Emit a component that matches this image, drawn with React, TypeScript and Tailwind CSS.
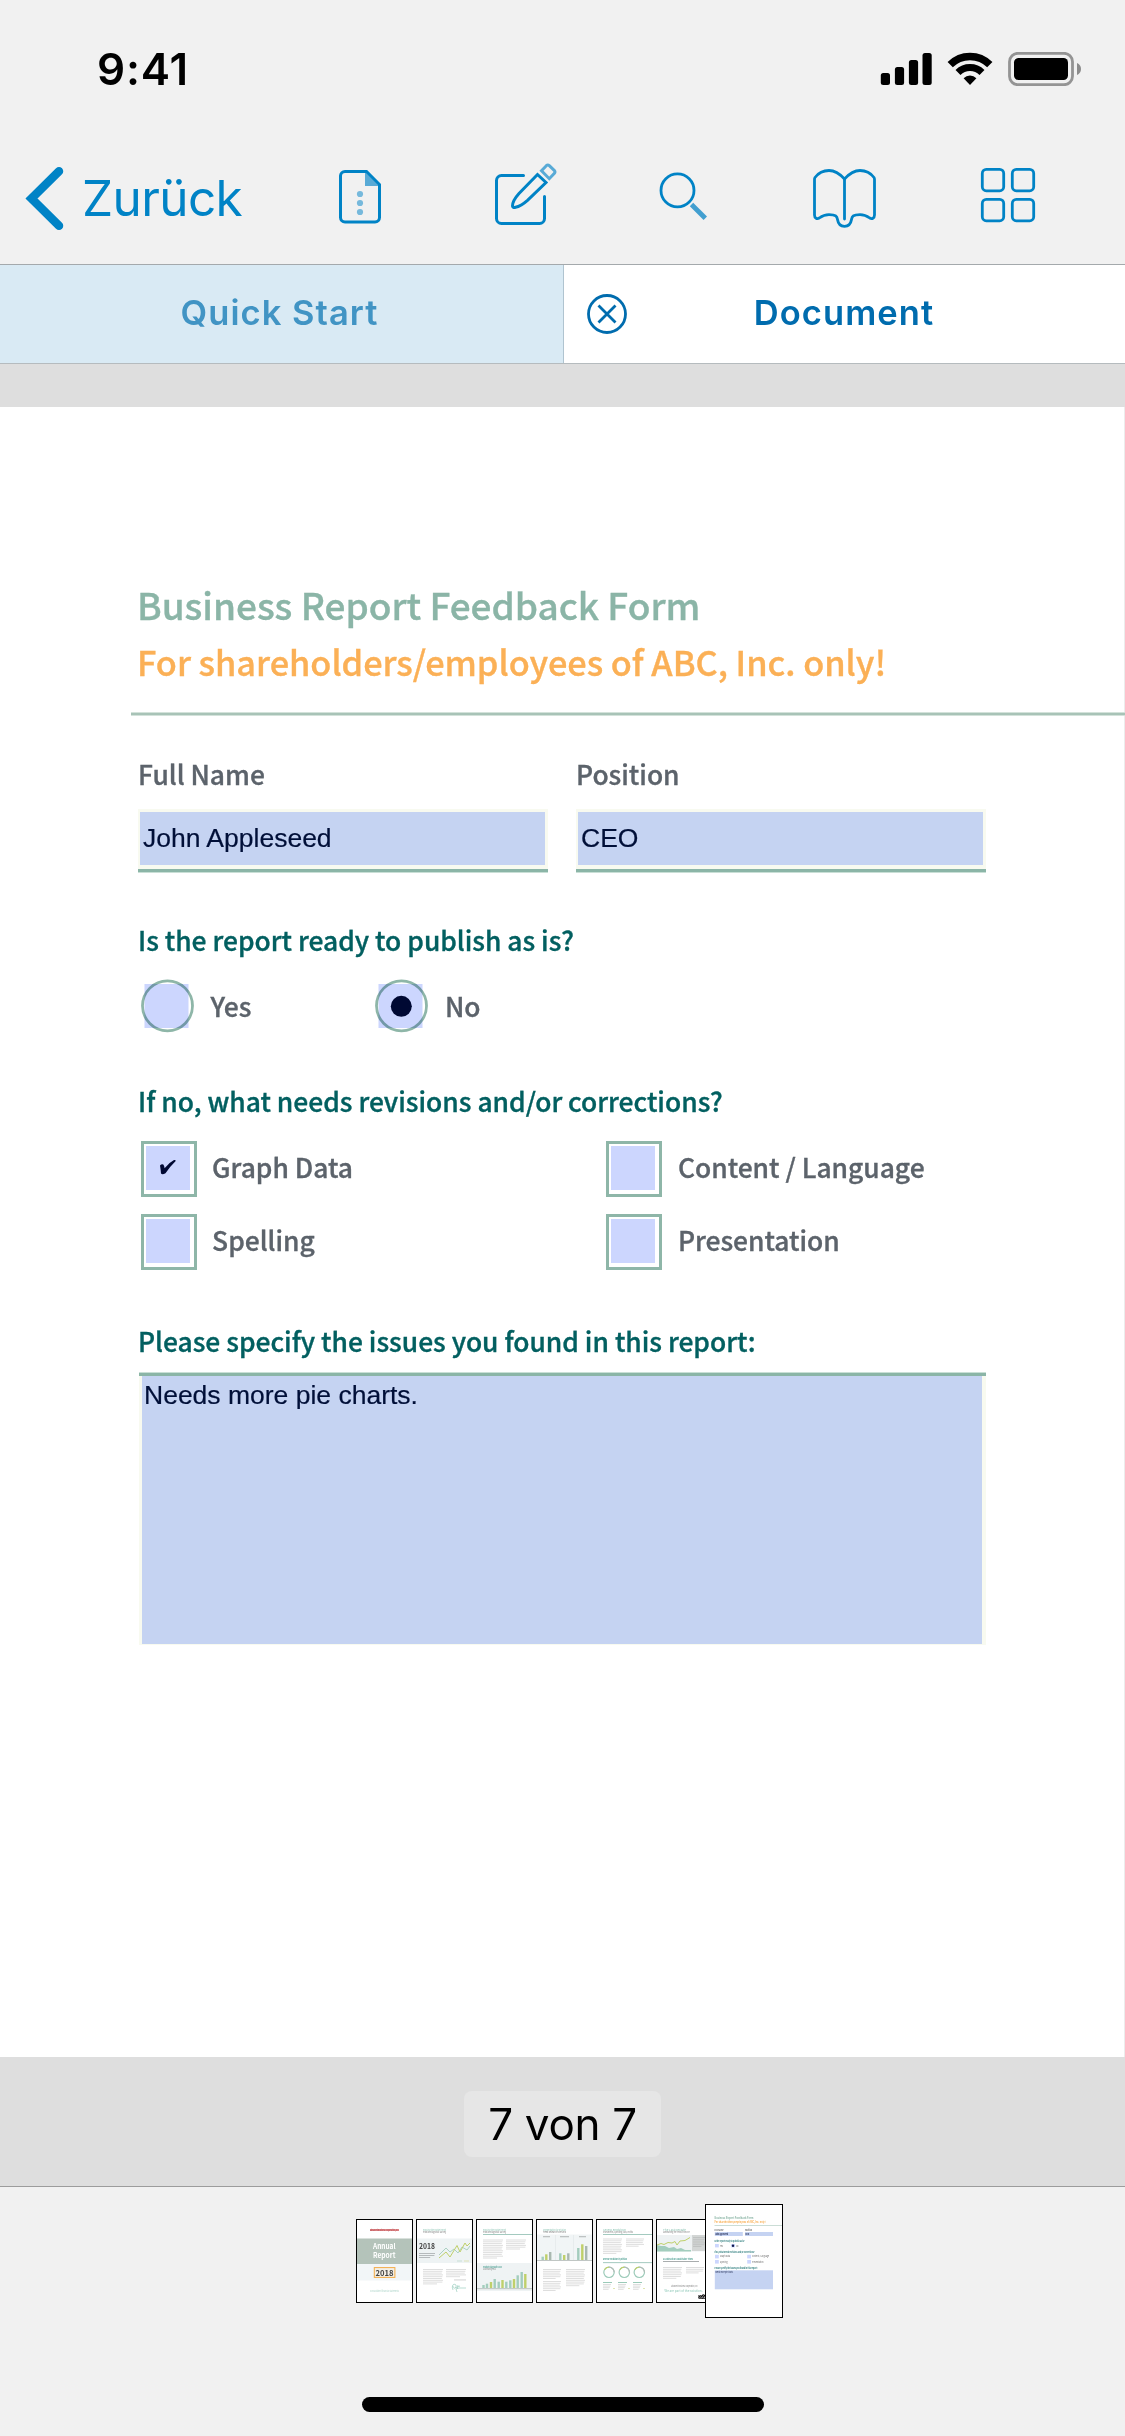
import React from 'react';

const BLUE = '#0083c6';
const TEAL = '#a3cdbd';
const LIME = '#bfd06a';

/* ---------- Status bar ---------- */

function Signal() {
  return (
    <svg width="52" height="34" viewBox="880 52 52 34">
      <rect x="880.8" y="73" width="9.2" height="12" rx="2.5" />
      <rect x="894.9" y="67" width="9.2" height="18" rx="2.5" />
      <rect x="908.9" y="60" width="9.2" height="25" rx="2.5" />
      <rect x="922.5" y="53" width="9.2" height="32" rx="2.5" />
    </svg>
  );
}

function Wifi() {
  return (
    <svg width="46" height="34" viewBox="947 52 46 34" fill="none" stroke="#000">
      <path d="M950.2 64.7A28 28 0 0 1 989.8 64.7" strokeWidth="7.4" />
      <path d="M958 72.5A17 17 0 0 1 982 72.5" strokeWidth="7" />
      <path d="M963.6 78.2A9.2 9.2 0 0 1 976.4 78.2L970 85Z" fill="#000" stroke="none" />
    </svg>
  );
}

function Battery() {
  return (
    <svg width="74" height="34" viewBox="1008 52 74 34">
      <rect x="1009.5" y="53.3" width="63" height="31.4" rx="8.5" fill="none" stroke="#949494" strokeWidth="2.8" />
      <rect x="1014" y="58" width="54" height="22" rx="4.5" />
      <path d="M1077 63c2.6 1 4 3.4 4 6s-1.4 5-4 6z" fill="#8c8c8c" />
    </svg>
  );
}

/* ---------- Toolbar icons ---------- */

function ToolIcon({ box, children }: { box: string; children: React.ReactNode }) {
  return (
    <svg width="72" height="72" viewBox={box} fill="none" stroke={BLUE} strokeWidth="3" className="shrink-0">
      {children}
    </svg>
  );
}

function Toolbar() {
  return (
    <div className="flex h-[120px] items-center">
      <button className="flex h-[72px] w-[324px] items-center pl-[24px] text-[#0083c6]">
        <svg width="42" height="72" viewBox="24 162 42 72" fill="none" stroke={BLUE} strokeWidth="8.5">
          <path d="M59 171.300L31.5 198.500L59 225.700" strokeLinecap="round" />
        </svg>
        <span className="ml-[16px] pt-[2px] text-[49.5px] leading-none tracking-[-0.6px]">Zurück</span>
      </button>
      <div className="flex w-[720px] justify-between">
        <ToolIcon box="324 162 72 72">
          <path d="M365 171.500V186H379.500Z" fill="#58aad6" stroke="none" />
          <path d="M345 171.500H366.500L379.500 184.500V217.500a4.500 4.500 0 0 1-4.500 4.500H345a4.500 4.500 0 0 1-4.500-4.500V176a4.500 4.500 0 0 1 4.500-4.500Z" />
          <g fill="#76b9dc" stroke="none">
            <circle cx="360" cy="194" r="3.1" />
            <circle cx="360" cy="203" r="3.1" />
            <circle cx="360" cy="212" r="3.1" />
          </g>
        </ToolIcon>
        <ToolIcon box="486 162 72 72">
          <path d="M523.500 175.500H501.500a5 5 0 0 0-5 5V218.500a5 5 0 0 0 5 5H539.500a5 5 0 0 0 5-5V196.500" strokeLinecap="round" />
          <path d="M537.500 174.500L519 193.500C514.500 198.500 512.500 203 512.500 206C512.700 207.300 513.700 207.800 515.500 207.300C519.500 206.500 523 204.300 527.500 200.300L546 182.500Z" />
          <path d="M541.500 170.800L546.300 165.700Q547.800 164.300 549.300 165.700L554.200 170.300Q555.600 171.800 554.400 173.400L549.300 178.700Z" stroke="#58aad6" />
        </ToolIcon>
        <ToolIcon box="648 162 72 72">
          <circle cx="677.5" cy="190.4" r="16.5" strokeWidth="2.8" />
          <path d="M691.500 204.500L705.300 218.300" stroke="#429fd0" strokeWidth="4.8" />
        </ToolIcon>
        <ToolIcon box="810 162 72 72">
          <path
            d="M844.500 179C839.500 173.500 834.500 170.500 829 170.500C823.500 170.500 818 173.500 815 177.500Q814.500 178.200 814.500 179.500V215C814.500 218.300 817 219.300 819.300 218C822 216 825.500 214.600 829 214.600C836 214.600 837 216.500 837.500 219.500C838.300 224.500 841 226.300 844.500 226.300C848 226.300 850.700 224.500 851.500 219.500C852 216.500 853 214.600 860 214.600C863.500 214.600 867 216 869.700 218C872 219.300 874.500 218.300 874.500 215V179.500Q874.500 178.200 874 177.500C871 173.500 865.500 170.500 860 170.500C854.500 170.500 849.500 173.500 844.500 179Z"
            strokeWidth="2.8"
          />
          <path d="M844.500 179V219" strokeLinecap="round" strokeWidth="2.8" />
        </ToolIcon>
        <ToolIcon box="972 162 72 72">
          <rect x="982.3" y="169.4" width="21.4" height="21.4" rx="4" strokeWidth="2.8" />
          <rect x="1012.3" y="169.4" width="21.4" height="21.4" rx="4" strokeWidth="2.8" />
          <rect x="982.3" y="199.4" width="21.4" height="21.4" rx="4" strokeWidth="2.8" />
          <rect x="1012.3" y="199.4" width="21.4" height="21.4" rx="4" strokeWidth="2.8" />
        </ToolIcon>
      </div>
    </div>
  );
}

/* ---------- Form pieces ---------- */

function Field({ label, value }: { label: string; value: string }) {
  return (
    <div className="w-[410px]">
      <div className="text-[26.4px] leading-[42px] font-medium text-[#5c636b]">{label}</div>
      <div className="mt-[14px] h-[60px] bg-[#f8faf0] pt-[3px] pr-[3px] pl-[2px]">
        <div className="flex h-[53px] items-center bg-[#c5d3f2] pt-px pl-[3px] font-['Liberation_Sans',sans-serif] text-[26.5px] text-[#000f38] [-webkit-text-stroke:0.2px]">
          {value}
        </div>
      </div>
      <div className="h-1 border-b border-[#c9dfd6] bg-[#8bb5a7]" />
    </div>
  );
}

function Question({ children }: { children: React.ReactNode }) {
  return <div className="relative top-px pl-px text-[26.4px] leading-10 font-medium whitespace-nowrap text-[#025f60]">{children}</div>;
}

function Radio({ label, checked }: { label: string; checked?: boolean }) {
  return (
    <div className="flex h-[54px] items-center">
      <svg width="54" height="54" viewBox="0 0 54 54">
        <circle cx="26.5" cy="26.8" r="25" fill="#fff" stroke="#8eb6a8" strokeWidth="2.8" />
        <rect x="3.5" y="5" width="44" height="44" fill="#ccd6fe" style={{ mixBlendMode: 'multiply' }} />
        {checked && <circle cx="26.3" cy="27.3" r="10.5" fill="#000933" />}
      </svg>
      <span className="pl-4 text-[26.4px] font-medium text-[#5c636b]">{label}</span>
    </div>
  );
}

function Check({ label, checked }: { label: string; checked?: boolean }) {
  return (
    <div className="flex h-14 items-center">
      <div className="h-14 w-14 border-[3px] border-[#8eb6a8] p-[2px]">
        <div className="flex h-11 w-11 items-center justify-center bg-[#ccd6fe]">
          {checked && (
            <svg width="44" height="44" viewBox="0 0 44 44">
              <path d="M14 19.500Q15.500 17.800 17.300 18.500Q18.300 19.800 18.600 22.300Q23 16.500 28 14Q29.800 13.600 29.700 15Q24.500 20 19.500 27.200Q16.500 29.200 15 27.600Q14.800 24 14 19.500Z" fill="#000933" />
            </svg>
          )}
        </div>
      </div>
      <span className="pb-[4px] pl-[15.5px] text-[26.4px] font-medium whitespace-nowrap text-[#5c636b]">{label}</span>
    </div>
  );
}

/* ---------- Page thumbnails ---------- */

function Lines({ x, y, w, n, step = 1.8, color = '#dedede' }: { x: number; y: number; w: number; n: number; step?: number; color?: string }) {
  return (
    <g fill={color}>
      {Array.from({ length: n }, (_, i) => (
        <rect key={i} x={x} y={y + i * step} width={i === n - 1 ? w * 0.7 : w - (i % 3) * 0.6} height="1" />
      ))}
    </g>
  );
}

function Tiny({ x, y, w, color, bold, size = 2.4, children }: { x: number; y: number; w: number; color: string; bold?: boolean; size?: number; children: string }) {
  return (
    <text x={x} y={y} fontSize={size} textLength={w} lengthAdjust="spacingAndGlyphs" fill={color} fontWeight={bold ? 700 : 400}>
      {children}
    </text>
  );
}

function Heading({ a, b, rule, w = 23 }: { a: string; b: string; rule?: boolean; w?: number }) {
  return (
    <g>
      <Tiny x={7} y={11.5} w={23} color="#8cc3b3">{a}</Tiny>
      <Tiny x={7} y={14.1} w={w} color="#777">{b}</Tiny>
      {rule && <rect x="7" y="15" width="50" height="0.8" fill="#8dbdb0" />}
    </g>
  );
}

function Bars({ data, base, w = 2.4 }: { data: [number, number, string][]; base: number; w?: number }) {
  return (
    <g>
      {data.map(([x, top, c]) => (
        <rect key={x} x={x - w / 2} y={top} width={w} height={base - top} fill={c} />
      ))}
    </g>
  );
}

function Thumb({ children }: { children: React.ReactNode }) {
  return (
    <svg width="57" height="84" viewBox="0 0 57 84" className="shrink-0 bg-white">
      {children}
      <rect x="0.5" y="0.5" width="56" height="83" fill="none" stroke="#000" />
    </svg>
  );
}

const GREY = '#a9b8b0';

function Thumbnails() {
  return (
    <div className="flex items-center gap-[3px] pl-[356px] font-['Noto_Sans_CJK_JP',sans-serif]">
      <Thumb>
        <rect x="14" y="10" width="29" height="2" fill="#eb9a9a" />
        <Tiny x={14} y={11.9} w={29} color="#b0444a" bold>Advanced Business Cooperation, Inc.</Tiny>
        <rect x="0" y="19.5" width="57" height="25.5" fill="#b4c3ba" />
        <rect x="0" y="45" width="57" height="16.5" fill="#f2f6f8" />
        <Tiny x={17} y={30} w={22.5} color="#fff" bold size={7.4}>Annual</Tiny>
        <Tiny x={17} y={39} w={22.5} color="#fff" bold size={7.4}>Report</Tiny>
        <rect x="18.3" y="48.6" width="20.6" height="9.8" fill="#f3efe6" stroke="#f2ac48" />
        <Tiny x={19.5} y={56.5} w={18} color="#454545" bold size={8}>2018</Tiny>
        <Tiny x={14} y={73} w={29} color="#a9d2c6">Consolidated financial statements</Tiny>
      </Thumb>
      <Thumb>
        <Heading a="Evolving the Market Trend" b="Product Diagnostic Survey" />
        <rect x="0" y="19.5" width="57" height="24.5" fill="#eef3f4" />
        <Tiny x={3} y={29.5} w={16} color="#454545" bold size={7.4}>2018</Tiny>
        <Lines x={3} y={34} w={16} n={3} step={2} color="#b5babc" />
        <path d="M23 36L30 29L34 33L38 30L42 34L46 28L51 31L54 27" fill="none" stroke={TEAL} strokeWidth="0.9" />
        <path d="M23 39L30 33L34 38L41 26.500L44 33L49 24L51 27L54 24" fill="none" stroke={LIME} strokeWidth="1" />
        <rect x="41" y="41.5" width="5" height="1" fill="#c8dfd6" />
        <rect x="48" y="41.5" width="5" height="1" fill="#dde3b8" />
        <Lines x={7} y={50} w={20} n={9} />
        <Lines x={30} y={50} w={20} n={5} />
        <rect x="38" y="60.5" width="12" height="0.9" fill="#ccc" />
        <path d="M37 71C35 66 38 64 40 66C41 69 37 71 37 67M39 69L44 67M41 73L40 70L43 69H50M42 66L41 70" fill="none" stroke="#9ccfc0" strokeWidth="0.7" />
      </Thumb>
      <Thumb>
        <Heading a="Evolving the Market Trend" b="Product Diagnostic Survey" rule />
        <Lines x={7} y={20.5} w={20} n={11} />
        <Lines x={30} y={20.5} w={20} n={6} />
        <rect x="0" y="44" width="57" height="28" fill="#eff3f4" />
        <Tiny x={7} y={48.5} w={19} color="#3d9688" bold>Product Diagnostic 2018</Tiny>
        <Tiny x={7} y={50.8} w={13} color="#777">As shown by 2018</Tiny>
        <rect x="0" y="69" width="57" height="1.2" fill="#c4cac8" />
        <Bars
          base={69}
          data={[[7.5, 66, TEAL], [11, 64.7, TEAL], [15, 63, LIME], [18.7, 60, TEAL], [22.7, 62.7, TEAL], [26.5, 61, LIME], [30.3, 62.7, TEAL], [34.3, 61.3, TEAL], [38, 60, LIME], [41.7, 56.3, TEAL], [45.7, 53, TEAL], [49.3, 55, LIME]]}
        />
      </Thumb>
      <Thumb>
        <Heading a="Segmentation by Division" b="Trend Research Overview" />
        <rect x="0" y="15.5" width="57" height="26" fill="#f1f5f6" />
        <path d="M19.500 16V41M37.500 16V41" stroke="#e2e8ea" strokeWidth="0.7" />
        <g fill="#a9adae">
          <rect x="7" y="17.3" width="7" height="0.9" />
          <rect x="24" y="17.3" width="9" height="0.9" />
          <rect x="43" y="17.3" width="7" height="0.9" />
        </g>
        <rect x="0" y="41" width="57" height="0.9" fill="#b9c0be" />
        <Bars
          base={41}
          data={[[6.7, 37.7, TEAL], [10.3, 35.3, LIME], [14.2, 33, GREY], [24.3, 34.3, TEAL], [28.2, 36, LIME], [32.3, 34.3, GREY], [42.3, 29, TEAL], [46.3, 25.3, LIME], [50.2, 27, GREY]]}
        />
        <Lines x={7} y={50} w={18} n={6} />
        <Lines x={7} y={62} w={18} n={6} />
        <Lines x={30} y={50} w={19} n={10} />
      </Thumb>
      <Thumb>
        <Heading a="General Breakdown" b="Investments, Spending Cuts, Profits" w={30} rule />
        <Lines x={7} y={19.5} w={19} n={9} />
        <Lines x={30} y={19.5} w={18} n={5} />
        <Tiny x={7} y={41} w={24} color="#3d9688" bold>Revenue Breakdown by Division</Tiny>
        <rect x="7" y="43.3" width="50" height="0.8" fill="#8dbdb0" />
        {[13, 28.3, 43.3].map((cx, i) => (
          <g key={cx} fill="none" strokeWidth="1.2">
            <circle cx={cx} cy="53.3" r="5.2" stroke="#9ccbb9" />
            <path d={`M${cx} 48.1A5.2 5.2 0 0 1 ${cx + 5.2} 53.3`} stroke="#b3bbb8" />
            <path d={`M${cx - 4.5} 50.7A5.2 5.2 0 0 1 ${cx} 48.1`} stroke={LIME} />
            <rect x={7 + i * 15} y="63" width="9" height="0.9" fill="#8fc4b0" stroke="none" />
            <Lines x={7 + i * 15} y={65} w={8} n={4} step={1.6} />
            <rect x={17 + i * 15} y="69" width="2" height="1" fill="#e0e5b0" stroke="none" />
          </g>
        ))}
      </Thumb>
      <Thumb>
        <Heading a="The Last Decade" b="Summarizing the Trends from 2007" w={27} />
        <rect x="0" y="16" width="57" height="16.5" fill="#eef2f3" />
        <path d="M1 26L5 27L9 27L13 29L18 28L21 30L25 29L29 31L35 31V32.500H1Z" fill={TEAL} />
        <path d="M1 26L5 24.500L8 25.500L12 23.500L16 24L19 22.500L21 26L24 22L29 21.500L34 18.500" fill="none" stroke={LIME} strokeWidth="1" />
        <rect x="36" y="16" width="21" height="16" fill="#d3d6d5" />
        <Lines x={37} y={18} w={12} n={6} color="#c0c3c2" />
        <Tiny x={7} y={41.2} w={30} color="#3d9688" bold>A Look Back on Sustainable Times</Tiny>
        <rect x="7" y="42" width="36" height="1" fill="#a9adae" />
        <Lines x={7} y={48} w={19} n={7} />
        <Lines x={30} y={48} w={18} n={4} />
        <Tiny x={15} y={68} w={27} color="#777">Advanced Business Cooperation, Inc.</Tiny>
        <Tiny x={8.5} y={73.3} w={38} color="#8cc7b6" size={3.2}>We are part of the solution.</Tiny>
        <path d="M42.500 79L44.500 76.500M44.500 79L47.500 75M42 77H49M46.500 79.500L49 75.500M42.500 79.200H49" stroke="#000" strokeWidth="1" fill="none" />
      </Thumb>
      <svg width="78" height="114" viewBox="0 0 78 114" className="z-10 -ml-[11px] shrink-0 bg-white">
        <Tiny x={9.5} y={15.2} w={39} color="#8bb5a5" bold size={3}>Business Report Feedback Form</Tiny>
        <Tiny x={9.5} y={19.2} w={51} color="#f9ac4d" bold size={3}>For shareholders/employees of ABC, Inc. only!</Tiny>
        <rect x="9.5" y="21.2" width="68" height="0.7" fill="#b5cfc4" />
        <Tiny x={9.5} y={26.6} w={9} color="#666" bold>Full Name</Tiny>
        <Tiny x={40} y={26.6} w={7} color="#666" bold>Position</Tiny>
        <rect x="9.8" y="28" width="28" height="4" fill="#c5d3f2" />
        <rect x="40" y="28" width="28" height="4" fill="#c5d3f2" />
        <Tiny x={10} y={31} w={13} color="#101a44" bold>John Appleseed</Tiny>
        <Tiny x={40.3} y={31} w={4} color="#101a44" bold>CEO</Tiny>
        <Tiny x={9.5} y={38} w={30} color="#1c7373" bold>Is the report ready to publish as is?</Tiny>
        <rect x="10" y="40" width="3.8" height="3.4" fill="#ccd6fe" />
        <rect x="26.2" y="40" width="3.8" height="3.4" fill="#ccd6fe" />
        <circle cx="28" cy="41.7" r="1.2" fill="#10184a" />
        <Tiny x={15} y={42.5} w={3} color="#666">Yes</Tiny>
        <Tiny x={31} y={42.5} w={2.5} color="#666">No</Tiny>
        <Tiny x={9.5} y={49} w={40} color="#1c7373" bold>If no, what needs revisions and/or corrections?</Tiny>
        {[50.8, 56].map((y) => (
          <g key={y}>
            <rect x="10" y={y} width="3.8" height="3.6" fill="#ccd6fe" />
            <rect x="42.2" y={y} width="3.8" height="3.6" fill="#ccd6fe" />
          </g>
        ))}
        <Tiny x={15} y={53.4} w={10} color="#666">Graph Data</Tiny>
        <Tiny x={47} y={53.4} w={17} color="#666">Content / Language</Tiny>
        <Tiny x={15} y={58.6} w={7.5} color="#666">Spelling</Tiny>
        <Tiny x={47} y={58.6} w={11.5} color="#666">Presentation</Tiny>
        <Tiny x={9.5} y={65.4} w={43} color="#1c7373" bold>Please specify the issues you found in this report:</Tiny>
        <rect x="9.8" y="66.3" width="58.2" height="19" fill="#c5d3f2" />
        <Tiny x={10.2} y={69} w={18} color="#101a44">Needs more pie charts.</Tiny>
        <rect x="0.5" y="0.5" width="77" height="113" fill="none" stroke="#000" />
      </svg>
    </div>
  );
}

/* ---------- Screen ---------- */

export default function App() {
  return (
    <div className="flex h-[2436px] w-[1125px] flex-col overflow-hidden bg-[#f1f1f1] font-['Inter',sans-serif] text-black">
      <header className="h-[265px] border-b border-[#a4a9ac]">
        <div className="flex h-[138px] items-center justify-between pr-[43px] pl-[97px]">
          <span className="text-[44px] font-semibold tracking-[0.8px]">9:41</span>
          <div className="flex gap-[15px]">
            <Signal />
            <Wifi />
            <Battery />
          </div>
        </div>
        <Toolbar />
      </header>

      <nav className="flex h-[99px] border-b border-[#b5bbbe] text-[34.5px] font-semibold">
        <div className="flex w-[564px] items-center justify-center border-r border-[#b0c4d0] bg-[#d9eaf4] pr-[4px] pb-[2px] tracking-[1.05px] text-[#4194c4]">
          Quick Start
        </div>
        <div className="flex flex-1 items-center bg-white pb-px text-[#006cae]">
          <svg width="40" height="40" viewBox="0 0 40 40" fill="none" stroke="currentColor" strokeWidth="2.8" className="ml-[23px]">
            <circle cx="20" cy="20" r="18.5" />
            <path d="M11.500 11.500L28.500 28.500M28.500 11.500L11.500 28.500" />
          </svg>
          <span className="flex-1 pb-px text-center tracking-[1.1px]">Document</span>
          <span className="w-16" />
        </div>
      </nav>

      <main className="h-[1822px] bg-[#dedede] pt-[43px]">
        <section className="h-[1650px] border-r border-[#ececec] bg-white pt-[169px] pl-[137px] font-['Noto_Sans_CJK_JP',sans-serif] [-webkit-text-stroke:0.35px]">
          <h1 className="text-[37px] leading-[57px] font-medium tracking-[-0.03px] whitespace-nowrap text-[#8bb5a7]">Business Report Feedback Form</h1>
          <h2 className="text-[34.3px] leading-[57px] font-medium tracking-[-0.02px] whitespace-nowrap text-[#fbb056]">
            For shareholders/employees of ABC, Inc. only!
          </h2>
          <div className="mt-[22px] -mr-px -ml-[6.5px] h-1 border-y border-[#d3e2da] bg-[#a8c3b7]" />

          <div className="mt-[37px] ml-px flex gap-7">
            <Field label="Full Name" value="John Appleseed" />
            <Field label="Position" value="CEO" />
          </div>

          <div className="mt-[46px]">
            <Question>Is the report ready to publish as is?</Question>
            <div className="mt-5 ml-[3.5px] grid grid-cols-[234.5px_200px]">
              <Radio label="Yes" />
              <Radio label="No" checked />
            </div>
          </div>

          <div className="mt-[47px]">
            <Question>If no, what needs revisions and/or corrections?</Question>
            <div className="mt-[21px] ml-[3.6px] grid grid-cols-[465.8px_400px] gap-y-[17px]">
              <Check label="Graph Data" checked />
              <Check label="Content / Language" />
              <Check label="Spelling" />
              <Check label="Presentation" />
            </div>
          </div>

          <div className="mt-[50px]">
            <Question>Please specify the issues you found in this report:</Question>
            <div className="mt-3 ml-[2px] w-[847px]">
              <div className="h-1 border-t border-[#c9dfd6] bg-[#8bb5a7]" />
              <div className="h-[269px] bg-[#f8faf0] pr-1 pb-px pl-[3px]">
                <div className="h-full bg-[#c5d3f2] pt-[4px] pl-[2px] font-['Liberation_Sans',sans-serif] text-[26.5px] leading-[30px] text-[#000f38] [-webkit-text-stroke:0.2px]">
                  Needs more pie charts.
                </div>
              </div>
            </div>
          </div>
        </section>

        <div className="flex justify-center pt-[34px]">
          <div className="flex h-[66px] w-[197px] items-center justify-center rounded-lg bg-[#e6e6e6] text-[44px] tracking-[-0.3px]">
            7 von 7
          </div>
        </div>
      </main>

      <footer className="flex flex-1 flex-col border-t border-[#9c9c9c] pt-[17px]">
        <Thumbnails />
        <div className="mt-[79px] h-[15px] w-[402px] self-center rounded-full bg-black" />
      </footer>
    </div>
  );
}
